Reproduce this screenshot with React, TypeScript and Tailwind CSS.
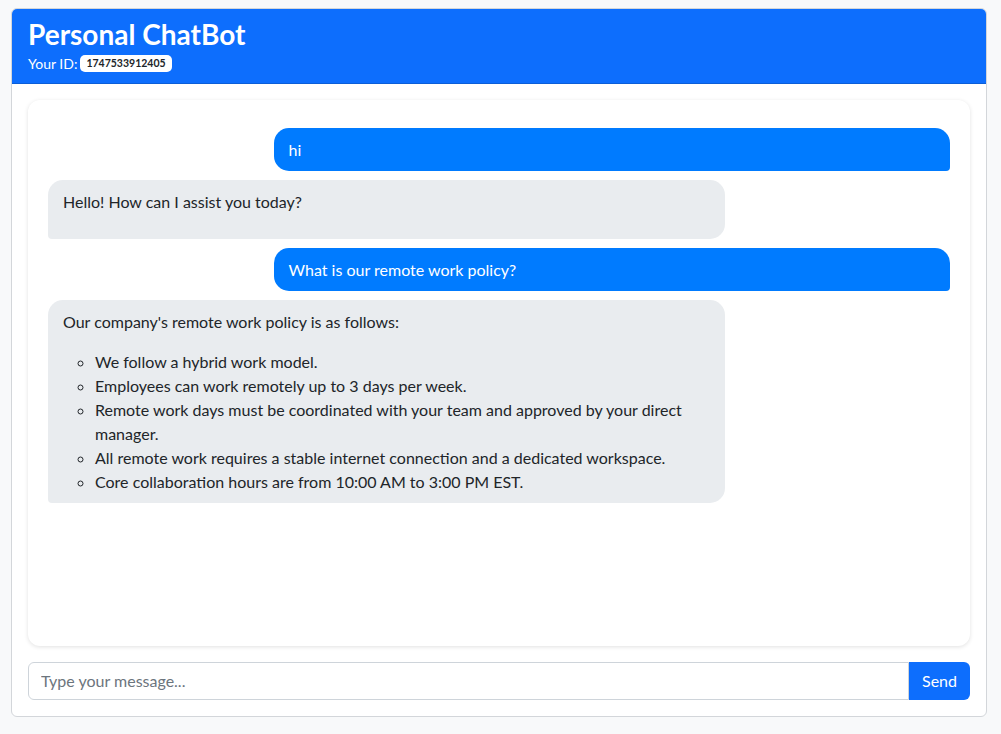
const font = { fontFamily: 'Lato, "Noto Sans", sans-serif' };

interface Message {
  role: 'user' | 'bot';
  text: string;
  list?: string[];
}

const messages: Message[] = [
  { role: 'user', text: 'hi' },
  { role: 'bot', text: 'Hello! How can I assist you today?' },
  { role: 'user', text: 'What is our remote work policy?' },
  {
    role: 'bot',
    text: "Our company's remote work policy is as follows:",
    list: [
      'We follow a hybrid work model.',
      'Employees can work remotely up to 3 days per week.',
      'Remote work days must be coordinated with your team and approved by your direct manager.',
      'All remote work requires a stable internet connection and a dedicated workspace.',
      'Core collaboration hours are from 10:00 AM to 3:00 PM EST.',
    ],
  },
];

export default function App() {
  return (
    <div className="min-h-[734px] bg-[#f8f9fa] pt-2 pl-[11px] pr-[14px] text-[#212529]" style={font}>
      <div className="overflow-hidden rounded-md border border-[#d3d6da] bg-white">
        {/* Header */}
        <div className="border-b border-[#0b5ed7] bg-[#0d6efd] px-4 pt-[8px] pb-[11px] text-white">
          <h1 className="text-[28px] font-bold leading-[34px]">Personal ChatBot</h1>
          <div className="mt-[4px] flex items-center gap-[3px] text-sm leading-[17px]">
            <span>Your ID:</span>
            <span className="rounded-[5px] bg-white px-[6px] py-[2px] text-[10.5px] font-bold leading-[13px] text-[#212529]">
              1747533912405
            </span>
          </div>
        </div>

        {/* Body */}
        <div className="p-4">
          <div className="h-[546px] rounded-xl bg-white px-5 pt-7 shadow-[0_1px_4px_rgba(0,0,0,0.12)]">
            <div className="flex flex-col gap-[9px]">
              {messages.map((m, i) =>
                m.role === 'user' ? (
                  <div
                    key={i}
                    className="ml-auto w-3/4 rounded-[15px] rounded-br-[4px] bg-[#007bff] px-[15px] py-[9.5px] text-base leading-6 text-white"
                  >
                    {m.text}
                  </div>
                ) : (
                  <div
                    key={i}
                    className="w-3/4 rounded-[15px] rounded-bl-[4px] bg-[#e9ecef] px-[15px] pt-[10px] pb-[9px] text-base leading-6 text-[#212529]"
                  >
                    <p className="mb-4">{m.text}</p>
                    {m.list && (
                      <ul className="list-[circle] pl-8">
                        {m.list.map((li, j) => (
                          <li key={j}>{li}</li>
                        ))}
                      </ul>
                    )}
                  </div>
                )
              )}
            </div>
          </div>

          {/* Input */}
          <div className="mt-4 flex h-[38px]">
            <input
              className="flex-1 rounded-l-md border border-[#ced4da] px-3 text-base text-[#212529] placeholder:text-[#6c757d] outline-none"
              placeholder="Type your message..."
              style={font}
            />
            <button className="w-[61px] rounded-r-md bg-[#0d6efd] text-base text-white" style={font}>
              Send
            </button>
          </div>
        </div>
      </div>
    </div>
  );
}
